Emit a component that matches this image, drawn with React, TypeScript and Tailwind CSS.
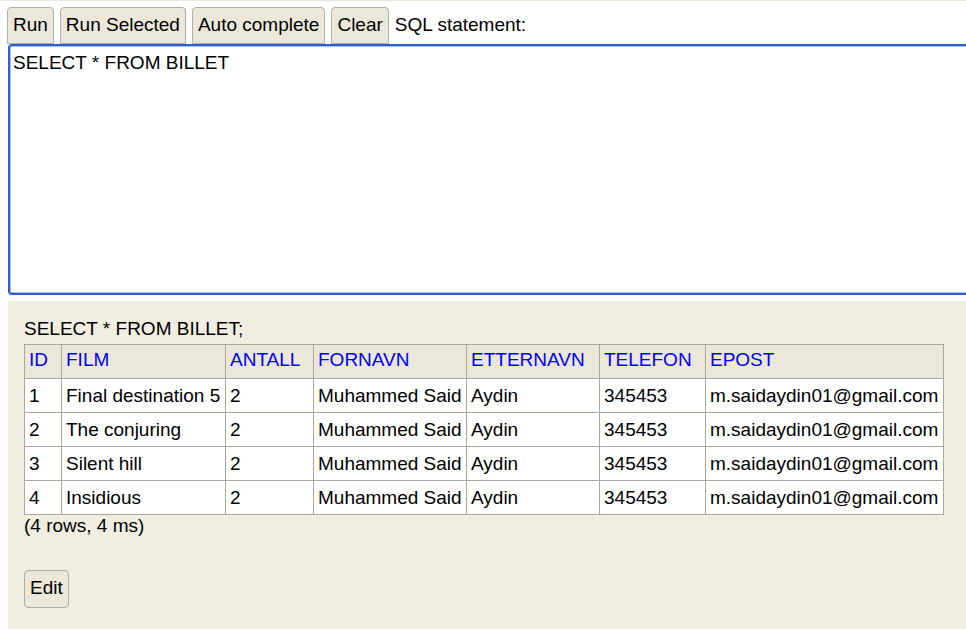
import React from "react";

const cols = ["ID", "FILM", "ANTALL", "FORNAVN", "ETTERNAVN", "TELEFON", "EPOST"];
const rows = [
  ["1", "Final destination 5", "2", "Muhammed Said", "Aydin", "345453", "m.saidaydin01@gmail.com"],
  ["2", "The conjuring", "2", "Muhammed Said", "Aydin", "345453", "m.saidaydin01@gmail.com"],
  ["3", "Silent hill", "2", "Muhammed Said", "Aydin", "345453", "m.saidaydin01@gmail.com"],
  ["4", "Insidious", "2", "Muhammed Said", "Aydin", "345453", "m.saidaydin01@gmail.com"],
];

function TopButton({ label }: { label: string }) {
  return (
    <button className="h-[37px] px-[5px] pt-[6px] pb-[8px] border border-[#b2aea2] rounded-t-[4px] bg-[#ebe8d9] leading-[22px] whitespace-nowrap text-black">
      {label}
    </button>
  );
}

export default function App() {
  return (
    <div className="w-[966px] h-[630px] overflow-hidden bg-white font-['Liberation_Sans',Arial,sans-serif] text-[19px] leading-[22px] text-black">
      <div className="h-px bg-[#ece9d8]" />
      <div className="flex items-baseline gap-[6px] pl-[7px] pt-[6px]">
        <TopButton label="Run" />
        <TopButton label="Run Selected" />
        <TopButton label="Auto complete" />
        <TopButton label="Clear" />
        <span className="whitespace-nowrap">SQL statement:</span>
      </div>
      <div className="ml-[8px] w-[1000px] h-[251px] rounded-[4px] border-2 border-[#2d5fcf] shadow-[inset_0_0_0_1px_#a9c0ef] bg-white px-[3px] pt-[6px] whitespace-pre">
        SELECT * FROM BILLET
      </div>
      <div className="ml-[8px] mt-[6px] h-[328px] bg-[#f1eee1] pl-[16px] pt-[17px]">
        <div>SELECT * FROM BILLET;</div>
        <table className="mt-[4px] border-collapse table-fixed w-[920px] bg-white">
          <colgroup>
            <col className="w-[37px]" />
            <col className="w-[164px]" />
            <col className="w-[88px]" />
            <col className="w-[153px]" />
            <col className="w-[133px]" />
            <col className="w-[106px]" />
            <col className="w-[238px]" />
          </colgroup>
          <thead>
            <tr className="bg-[#ebe8da]">
              {cols.map((c) => (
                <th
                  key={c}
                  className="border border-[#aca899] px-[4px] pt-[4px] pb-[7px] text-left font-normal text-[#0000ff] leading-[22px] whitespace-nowrap"
                >
                  {c}
                </th>
              ))}
            </tr>
          </thead>
          <tbody>
            {rows.map((r, i) => (
              <tr key={i}>
                {r.map((v, j) => (
                  <td
                    key={j}
                    className="border border-[#aca899] px-[4px] pt-[6px] pb-[5px] leading-[22px] whitespace-nowrap overflow-hidden"
                  >
                    {v}
                  </td>
                ))}
              </tr>
            ))}
          </tbody>
        </table>
        <div>(4 rows, 4 ms)</div>
        <button className="mt-[33px] h-[38px] px-[5px] pt-[6px] pb-[8px] border border-[#b2aea2] rounded-[4px] bg-[#ebe8d9] leading-[22px] text-black">
          Edit
        </button>
      </div>
    </div>
  );
}
